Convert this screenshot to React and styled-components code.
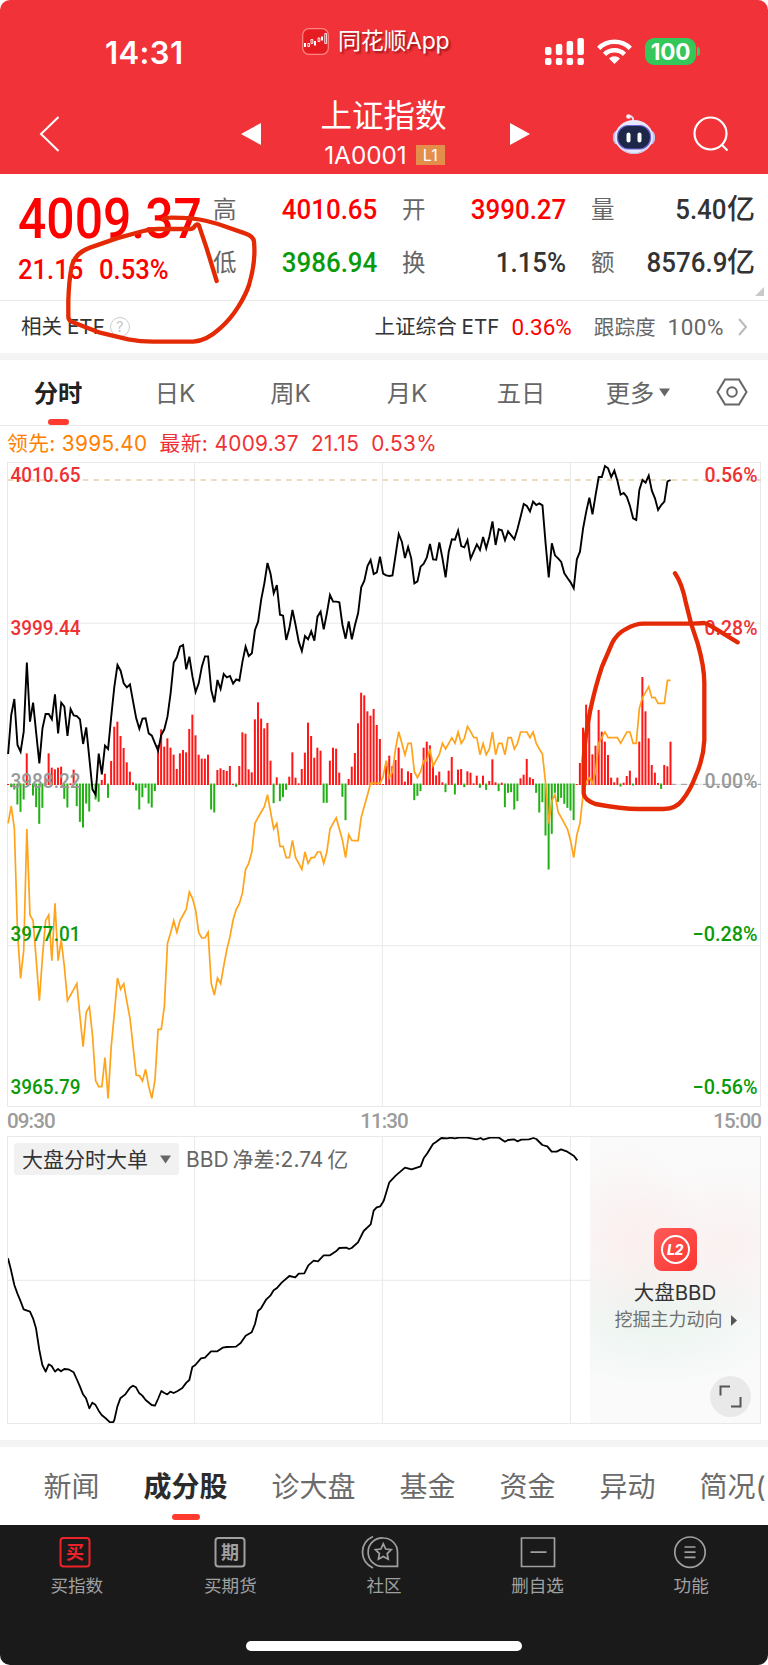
import styled, { createGlobalStyle } from 'styled-components';

const fonts = {
    ui: "Inter, 'Noto Sans CJK SC', sans-serif",
    num: "Roboto, 'Noto Sans CJK SC', sans-serif",
};
const colors = {
    brand: '#f13238',
    up: '#ff0000',
    down: '#0a9a0a',
    dark: '#333333',
    gray: '#666666',
    line: '#e9e9e9',
};

const GlobalStyle = createGlobalStyle`
    * { box-sizing: border-box; }
    body {
        margin: 0;
        background: #ffffff;
    }
    svg {
        display: block;
        flex: none;
    }
`;

const Screen = styled.div`
    position: relative;
    width: 768px;
    height: 1665px;
    overflow: hidden;
    border-radius: 10px;
    background: #fff;
    color: ${colors.dark};
    font-family: ${fonts.ui};
    white-space: nowrap;
    display: flex;
    flex-direction: column;
`;

// HEADER
const Header = styled.header`
    height: 174px;
    flex: none;
    background: ${colors.brand};
    color: #fff;
`;
const StatusBar = styled.div`
    height: 100px;
    display: grid;
    grid-template-columns: 302px 1fr 223px;
    align-items: start;
`;
const Clock = styled.div`
    padding: 36px 0 0 105px;
    font-size: 31px;
    line-height: 34px;
    font-weight: 600;
    letter-spacing: .4px;
`;
const AppMark = styled.div`
    display: flex;
    align-items: center;
    gap: 9px;
    padding-top: 24px;
    font-size: 23px;
    line-height: 34px;
    letter-spacing: -.3px;
    text-shadow: 2px 2px 2px rgba(90, 0, 0, .55);
`;
const StatusIcons = styled.div`
    display: flex;
    align-items: center;
    padding-top: 38px;
`;
const Wifi = styled.svg`
    margin-left: 13px;
`;
const Battery = styled.div`
    margin-left: 13px;
    width: 51px;
    height: 27px;
    border-radius: 9px;
    background: #34c759;
    text-align: center;
    font-size: 22.5px;
    line-height: 27px;
    font-weight: 700;
    letter-spacing: -.2px;
`;
const BatteryCap = styled.div`
    margin-left: 1px;
    width: 3px;
    height: 9px;
    border-radius: 0 4px 4px 0;
    background: #34c759;
`;
const TitleBar = styled.div`
    height: 74px;
    display: grid;
    grid-template-columns: 241px 20px 249px 23px 79px 1fr;
    align-items: center;
    padding-bottom: 6px;
`;
const BackIcon = styled.svg`
    margin-left: 39px;
`;
const TitleBlock = styled.div`
    padding-right: 4px;
    text-align: center;
`;
const Title = styled.div`
    font-size: 31.5px;
    line-height: 36px;
    margin-top: -3px;
`;
const Code = styled.div`
    display: flex;
    justify-content: center;
    align-items: center;
    gap: 9px;
    font-size: 24.3px;
    line-height: 26px;
    margin-top: 8px;
    padding-left: 2px;
`;
const Level = styled.span`
    width: 29px;
    height: 20px;
    background: #e38f4b;
    font-size: 16px;
    line-height: 20px;
    text-align: center;
`;
const TitleActions = styled.div`
    display: flex;
    align-items: center;
    gap: 37px;
`;

// QUOTE
const Quote = styled.section`
    position: relative;
    height: 127px;
    flex: none;
    border-bottom: 1px solid ${colors.line};
    display: grid;
    grid-template-columns: 213px 164px 25px 164px 25px 164px;
    font-family: ${fonts.num};
`;
const LastPrice = styled.div`
    padding: 20px 0 0 18px;
    color: ${colors.up};
    font-weight: 500;
`;
// the quote digits are narrower than the stock Roboto ones
const BigNumber = styled.div`
    width: 195px;
    font-size: 56px;
    line-height: 50px;
    transform: scaleX(.89);
    transform-origin: left;
`;
const Change = styled.div`
    display: flex;
    gap: 17px;
    margin-top: 11px;
    font-size: 27.5px;
    line-height: 30px;
    transform: scaleX(.93);
    transform-origin: left;
`;
const StatColumn = styled.div`
    padding-top: 20px;
    display: flex;
    flex-direction: column;
    gap: 21px;
    ${props => props.$spaced && 'grid-column: span 2; padding-left: 25px;'}
`;
const Stat = styled.div`
    display: flex;
    align-items: center;
    height: 32px;

    span {
        margin-right: auto;
        color: ${colors.gray};
        font-size: 23.5px;
        line-height: 32px;
    }
    strong {
        color: ${props => props.color || colors.dark};
        font-size: 28px;
        line-height: 32px;
        font-weight: 500;
        transform: scaleX(.925);
        transform-origin: right;
    }
    em {
        font-style: normal;
        font-weight: 500;
        font-size: 28px;
        line-height: 32px;
    }
`;
const Corner = styled.i`
    position: absolute;
    right: 4px;
    bottom: 4px;
    border-style: solid;
    border-width: 0 0 9px 9px;
    border-color: transparent transparent #c9c9c9 transparent;
`;
const EtfRow = styled.section`
    height: 52px;
    flex: none;
    display: flex;
    align-items: center;
    padding: 0 21px 0 21px;
    font-size: 20.6px;
    line-height: 30px;
    word-spacing: -1px;
`;
const Help = styled.span`
    margin: 0 auto 0 5px;
    width: 20px;
    height: 20px;
    border: 1.5px solid #ccc;
    border-radius: 50%;
    color: #c4c4c4;
    font-size: 14px;
    line-height: 17px;
    text-align: center;
`;
const EtfPercent = styled.span`
    margin: 0 22px 0 12px;
    font-family: ${fonts.num};
    font-size: 22.5px;
    color: ${colors.up};
`;
const Track = styled.span`
    color: ${colors.gray};
    margin-right: 14px;

    b {
        margin-left: 12px;
        font-family: ${fonts.num};
        font-weight: 400;
        font-size: 22.5px;
        letter-spacing: .5px;
    }
`;
const Divider = styled.div`
    height: 7px;
    flex: none;
    background: #f4f4f4;
`;

// CHART TABS
const PeriodTabs = styled.nav`
    height: 66px;
    flex: none;
    border-bottom: 1px solid ${colors.line};
    display: grid;
    grid-template-columns: 116px 118px 113px 120px 108px 126px 62px;
    font-size: 24.3px;
    color: ${colors.gray};
`;
const Period = styled.div`
    display: flex;
    justify-content: center;
    align-items: center;
    gap: 5px;
    line-height: 64px;
    padding-top: 1px;

    svg { margin-top: -2px; }
`;
const Indicator = styled.i`
    width: ${props => props.width}px;
    height: 6px;
    border-radius: 3px;
    background: #ff3b30;
`;
const ActivePeriod = styled.div`
    display: flex;
    flex-direction: column;
    align-items: center;
    color: #222;
    font-weight: 700;
    line-height: 62px;
    padding-top: 2px;

    i { margin-top: -5px; }
`;
const Legend = styled.div`
    height: 36px;
    flex: none;
    display: flex;
    gap: 12px;
    padding: 0 7px;
    font-size: 20.8px;
    line-height: 36px;
    letter-spacing: .35px;
    color: #ee3134;

    span:first-child { color: #ff8000; }
`;
const ChartLabel = styled.text`
    font-family: ${fonts.num};
    font-size: 20.5px;
    font-weight: 500;
    fill: ${props => props.fill};
`;
const TimeAxis = styled.div`
    height: 29px;
    flex: none;
    display: flex;
    justify-content: space-between;
    padding: 0 7px 0 7px;
    font-family: ${fonts.num};
    font-size: 20.6px;
    line-height: 29px;
    font-weight: 500;
    letter-spacing: -.9px;
    color: #9b9b9b;
`;

// BBD
const BbdPanel = styled.section`
    height: 288px;
    flex: none;
    margin: 0 7px;
    border: 1px solid ${colors.line};
    display: grid;
    grid-template-columns: 582px 1fr;
`;
const BbdChart = styled.div`
    position: relative;
`;
const BbdCaption = styled.div`
    position: absolute;
    top: 6px;
    left: 6px;
    display: flex;
    align-items: center;
    gap: 7px;
    font-size: 21px;
    line-height: 31px;
    word-spacing: -2px;
    color: ${colors.gray};
`;
const Select = styled.div`
    width: 165px;
    height: 32px;
    border-radius: 3px;
    background: #f1f1f1;
    color: ${colors.dark};
    display: flex;
    align-items: center;
    justify-content: space-between;
    padding: 0 8px;
`;
const Promo = styled.div`
    position: relative;
    padding-top: 91px;
    background:
        radial-gradient(ellipse 75px 100px at 22% 36%, rgba(255, 200, 200, .22), transparent),
        radial-gradient(ellipse 110px 85px at 80% 38%, rgba(255, 200, 200, .18), transparent),
        radial-gradient(ellipse 140px 70px at 40% 64%, rgba(190, 230, 210, .26), transparent),
        #fafafa;
    display: flex;
    flex-direction: column;
    align-items: center;
`;
const L2Icon = styled.div`
    width: 43px;
    height: 43px;
    border-radius: 8px;
    background: linear-gradient(135deg, #ff5b58, #fb3530);
    display: flex;
    align-items: center;
    justify-content: center;

    span {
        width: 29px;
        height: 29px;
        border: 2px solid #fff;
        border-radius: 50%;
        color: #fff;
        font: italic 800 14px/25px Inter, sans-serif;
        text-align: center;
        letter-spacing: -.5px;
    }
`;
const PromoTitle = styled.div`
    margin-top: 8px;
    font-size: 20.5px;
    line-height: 28px;
`;
const PromoLink = styled.div`
    display: flex;
    align-items: center;
    gap: 8px;
    padding-left: 1px;
    color: #707070;
    font-size: 18px;
    line-height: 26px;
`;
const Expand = styled.div`
    position: absolute;
    right: 9px;
    bottom: 6px;
    width: 41px;
    height: 41px;
    border-radius: 50%;
    background: #e9e9e9;
    display: flex;
    align-items: center;
    justify-content: center;
`;
const Spacer = styled.div`
    height: 16px;
    flex: none;
`;

// BOTTOM
const SectionTabs = styled.nav`
    height: 78px;
    flex: none;
    display: flex;
    gap: 44px;
    padding-left: 43.5px;
    font-size: 28px;
    line-height: 81px;
    color: #6b6b6b;
`;
const SectionTab = styled.div`
    flex: none;
    display: flex;
    flex-direction: column;
    align-items: center;
    height: 78px;
    ${props => props.$active && 'color: #2b2b2b; font-weight: 700;'}

    i { margin-top: -14px; }
`;
const BottomBar = styled.footer`
    height: 140px;
    flex: none;
    background: #1a1a1a;
    display: flex;
    flex-direction: column;
    align-items: center;
    justify-content: space-between;
    padding-bottom: 14px;
`;
const NavItems = styled.div`
    width: 768px;
    display: flex;
`;
const NavItem = styled.div`
    flex: 1;
    padding-top: 10px;
    display: flex;
    flex-direction: column;
    align-items: center;
    color: #a0a0a0;
    font-size: 17.6px;
    line-height: 20px;

    svg {
        margin-bottom: 7px;
        margin-left: ${props => props.$shift || 0}px;
    }
`;
const IconText = styled.text`
    font-family: 'Noto Sans CJK SC', sans-serif;
    font-weight: 700;
    font-size: 18px;
    text-anchor: middle;
`;
const HomeIndicator = styled.div`
    width: 276px;
    height: 10px;
    border-radius: 5px;
    background: #fff;
`;
const Scribbles = styled.svg`
    position: absolute;
    top: 0;
    left: 0;
    pointer-events: none;
`;

// One value per minute from 09:30, kept at three units per pixel
const price = [
    912, 795, 747, 885, 905, 845, 638, 815, 758, 850, 940, 835, 792, 792, 808, 733, 850, 758, 770, 858,
    777, 796, 798, 808, 882, 832, 925, 1018, 1034, 911, 973, 887, 897, 800, 710, 645, 662, 700, 712, 703,
    755, 805, 836, 806, 805, 850, 857, 880, 902, 855, 838, 800, 730, 638, 622, 590, 585, 658, 620, 680,
    726, 700, 650, 619, 619, 720, 757, 690, 717, 672, 682, 678, 701, 688, 692, 635, 590, 618, 610, 540,
    515, 448, 400, 339, 372, 430, 405, 494, 497, 570, 535, 480, 525, 575, 603, 558, 568, 544, 572, 500,
    485, 538, 490, 435, 455, 455, 457, 525, 566, 514, 568, 525, 490, 412, 392, 348, 330, 372, 367, 320,
    371, 376, 378, 376, 315, 252, 275, 324, 291, 325, 400, 394, 350, 341, 322, 282, 328, 329, 277, 325,
    382, 305, 268, 269, 242, 288, 292, 270, 326, 305, 283, 300, 261, 295, 260, 214, 285, 238, 241, 271,
    244, 256, 268, 237, 200, 162, 168, 184, 155, 165, 160, 166, 280, 382, 280, 316, 325, 336, 370, 384,
    397, 415, 328, 305, 235, 185, 143, 193, 135, 81, 81, 48, 55, 81, 62, 93, 134, 129, 141, 168,
    205, 210, 120, 90, 98, 77, 122, 145, 180, 165, 155, 94, 90,
];
const leading = [
    1120, 1068, 1135, 1445, 1585, 1500, 1137, 1395, 1412, 1530, 1652, 1520, 1412, 1395, 1532, 1360, 1532, 1470, 1550, 1652,
    1635, 1618, 1601, 1700, 1790, 1687, 1670, 1755, 1892, 1910, 1910, 1823, 1945, 1790, 1690, 1584, 1618, 1601, 1655, 1705,
    1790, 1876, 1877, 1893, 1858, 1910, 1945, 1890, 1738, 1738, 1670, 1480, 1448, 1412, 1447, 1412, 1395, 1378, 1326, 1345,
    1380, 1448, 1464, 1464, 1447, 1600, 1635, 1584, 1601, 1548, 1498, 1460, 1410, 1378, 1361, 1328, 1258, 1240, 1206, 1120,
    1102, 1086, 1070, 1034, 1086, 1137, 1120, 1189, 1189, 1223, 1223, 1171, 1223, 1240, 1258, 1206, 1240, 1223, 1223, 1206,
    1206, 1240, 1206, 1137, 1120, 1103, 1137, 1171, 1223, 1154, 1171, 1172, 1172, 1102, 1068, 1035, 1000, 1000, 1000, 1000,
    980, 932, 983, 965, 895, 845, 880, 915, 880, 880, 965, 983, 965, 932, 932, 897, 948, 930, 913, 880,
    897, 880, 863, 880, 846, 880, 865, 829, 845, 862, 863, 914, 880, 914, 897, 846, 914, 880, 880, 914,
    863, 863, 897, 880, 846, 846, 846, 863, 846, 880, 897, 913, 1000, 1120, 1052, 1034, 1086, 1103, 1120, 1137,
    1172, 1223, 1155, 1120, 1035, 995, 983, 1000, 965, 880, 863, 846, 863, 863, 863, 863, 880, 863, 846, 846,
    880, 880, 775, 743, 727, 710, 743, 743, 760, 760, 760, 691, 691,
];
const flow = [
    3, -8, -15, -60, -82, -45, 95, 3, -33, -68, -118, -70, 20, 95, 52, 47, 52, 55, -43, -69,
    5, 46, -65, -112, -129, -57, -81, 3, -45, -52, 15, 34, -40, 72, 175, 190, 147, 111, 68, 40,
    8, -18, -75, -38, -10, -57, -69, -20, 120, 167, 115, 140, 112, 91, 48, 95, 105, 98, 168, 211,
    149, 91, 79, 79, 91, -75, -84, 45, 50, 45, 42, 57, 4, -7, 57, 158, 154, 47, 38, 197,
    248, 199, 170, 186, 73, -56, 23, -50, -38, -16, 25, 98, 22, 5, 48, 97, 187, 147, 82, 112,
    103, -55, -55, 73, 112, 109, 37, -37, -107, 18, 55, 96, 185, 277, 269, 221, 208, 228, 180, 138,
    3, 70, 88, 57, 75, 112, 50, 10, 41, 36, -47, -34, -20, 112, 130, 119, 60, 29, 40, 8,
    -23, 43, 84, -30, 46, 48, -8, 41, 37, 5, 28, -10, 28, -16, 12, 77, 8, -20, 7, -68,
    -25, -23, -75, -50, 20, 31, 78, 23, 18, -25, -84, -53, -153, -255, -148, -25, -52, -40, -58, -70,
    -78, -107, 3, 66, 172, 241, 217, 92, 118, 225, 160, 130, 90, 22, 8, 22, -6, 7, 27, 43,
    -3, 22, 130, 324, 221, 140, 60, 37, 6, -13, 60, 56, 130,
];
const bbd = '24,415 33,450 43,495 52,520 61,542 71,568 90,575 99,595 108,625 118,690 127,735 137,755 146,733 155,738 165,755 174,747 183,754 193,747 205,748 221,757 230,777 240,800 249,823 258,835 268,865 277,848 286,854 296,872 305,885 316,894 330,907 340,906 343,900 352,860 361,835 375,824 390,803 399,797 408,802 418,820 427,827 437,840 455,855 465,857 474,837 484,813 493,819 502,823 511,815 521,819 533,813 547,804 559,788 568,780 577,741 586,735 603,715 615,713 633,694 652,694 668,683 680,681 708,680 722,669 737,647 755,637 765,612 774,573 783,565 799,538 811,527 821,511 830,505 845,488 868,468 886,472 896,461 913,460 925,436 941,422 954,424 971,406 990,406 1008,394 1018,384 1040,383 1047,387 1055,384 1074,367 1091,333 1112,313 1121,272 1130,262 1141,259 1149,246 1152,240 1168,187 1187,167 1215,143 1235,148 1262,139 1271,115 1282,100 1299,72 1307,67 1324,54 1342,55 1352,53 1364,55 1377,53 1402,53 1430,58 1442,54 1450,59 1470,53 1497,53 1515,65 1524,60 1542,58 1552,64 1564,59 1587,58 1600,54 1609,57 1627,75 1642,79 1655,95 1670,95 1683,88 1702,95 1722,108 1732,121';

const minuteX = i => 8.1 + i * 3.125;
const toPoints = series => series.map((v, i) => `${minuteX(i)},${v / 3 - 12}`).join(' ');

const leftLabels = [
    ['4010.65', 19.7, '#ee3134'],
    ['3999.44', 173, '#ee3134'],
    ['3988.22', 325.7, '#999'],
    ['3977.01', 479, colors.down],
    ['3965.79', 632, colors.down],
];
const rightLabels = [
    ['0.56%', 19.7, '#ee3134', 53],
    ['0.28%', 173, '#ee3134', 53],
    ['0.00%', 325.7, '#999', 53],
    ['−0.28%', 479, colors.down, 65],
    ['−0.56%', 632, colors.down, 65],
];

function MinuteChart() {
    return (
        <svg width="768" height="645" viewBox="0 0 768 645">
            <g stroke={colors.line} strokeWidth="1" fill="none">
                <rect x="7.5" y=".5" width="753" height="644" />
                <path d="M8 161.2H760M8 322.5H760M8 483.7H760M194.6 1V644M382.4 1V644M570.4 1V644" />
            </g>
            <path d="M8 18H761" stroke="#e6cda9" strokeWidth="1.6" strokeDasharray="5.4 5.3" />
            <path d="M670 322.3H761" stroke="#999" strokeWidth="1" strokeDasharray="6 5" />
            {flow.map((v, i) => (
                <rect
                    key={i}
                    x={minuteX(i) - 1.1}
                    y={v > 0 ? 323 - v / 3 : 321.5}
                    width="2"
                    height={Math.abs(v) / 3 + (v > 0 ? 0 : 1)}
                    fill={v > 0 ? '#ff1616' : '#22b014'}
                />
            ))}
            <polyline points={toPoints(leading)} fill="none" stroke="#ffa31a" strokeWidth="1.7" />
            <polyline points={toPoints(price)} fill="none" stroke="#000" strokeWidth="1.9" />
            {leftLabels.map(([label, y, fill]) => (
                <ChartLabel key={label} x="10.5" y={y} fill={fill} textLength="70" lengthAdjust="spacingAndGlyphs">{label}</ChartLabel>
            ))}
            {rightLabels.map(([label, y, fill, width]) => (
                <ChartLabel key={label} x={757.5 - width} y={y} fill={fill} textLength={width} lengthAdjust="spacingAndGlyphs">{label}</ChartLabel>
            ))}
        </svg>
    )
}

function Robot() {
    return (
        <svg width="44" height="42" viewBox="0 0 44 42">
            <path d="M21 9C22 5 20 3 17 3" fill="none" stroke="#dfe1f8" strokeWidth="2" />
            <circle cx="16.5" cy="3.5" r="2.3" fill="#f2f0ff" />
            <rect x="1" y="17" width="42" height="15" rx="6" fill="#bfc5ee" />
            <ellipse cx="22" cy="24" rx="19" ry="17" fill="#e8e8fb" />
            <path d="M8 34Q22 46 36 34Q30 41 22 41Q14 41 8 34Z" fill="#b9bce6" />
            <rect x="5.5" y="12.5" width="33" height="23.5" rx="11" fill="#1d2748" stroke="#6d62d8" strokeWidth="1.2" />
            <rect x="14.5" y="19.5" width="4" height="10" rx="2" fill="#fff" />
            <rect x="25.5" y="19.5" width="4" height="10" rx="2" fill="#fff" />
        </svg>
    )
}

function StatusRow() {
    return (
        <StatusBar>
            <Clock>14:31</Clock>
            <AppMark>
                <svg width="27" height="27" viewBox="0 0 27 27">
                    <rect x=".7" y=".7" width="25.6" height="25.6" rx="6" fill="#e51c22" stroke="#ff8585" strokeWidth="1.2" />
                    <path d="M3 15v4M13 13v4.5M20 8.5v4" stroke="#fff" strokeWidth="2" />
                    <path d="M5.8 15.5h1.8v3h-1.8ZM9 11.5h1.8v4h-1.8ZM16 10h1.8v3.5h-1.8ZM22.8 5.5h1.8v10h-1.8Z" fill="none" stroke="#fff" strokeWidth=".9" />
                </svg>
                同花顺App
            </AppMark>
            <StatusIcons>
                <svg width="39" height="27" viewBox="0 0 39 27" fill="#fff">
                    <rect x="0" y="9" width="6.5" height="8" rx="2" />
                    <rect x="10.8" y="6" width="6.5" height="11" rx="2" />
                    <rect x="21.6" y="3" width="6.5" height="14" rx="2" />
                    <rect x="32.4" y="0" width="6.5" height="17" rx="2" />
                    <rect x="0" y="20" width="6.5" height="7" rx="2" />
                    <rect x="10.8" y="20" width="6.5" height="7" rx="2" />
                    <rect x="21.6" y="20" width="6.5" height="7" rx="2" />
                    <rect x="32.4" y="20" width="6.5" height="7" rx="2" />
                </svg>
                <Wifi width="35" height="25" viewBox="0 0 35 25" fill="none" stroke="#fff" strokeWidth="4.6">
                    <path d="M1.7 9.3A22.5 22.5 0 0 1 33.3 9.3" />
                    <path d="M7.5 15.3A14.5 14.5 0 0 1 27.5 15.3" />
                    <path d="M17.5 25L12 19.5A8 8 0 0 1 23 19.5Z" fill="#fff" stroke="none" />
                </Wifi>
                <Battery>100</Battery>
                <BatteryCap />
            </StatusIcons>
        </StatusBar>
    )
}

const Caret = () => (
    <svg width="11" height="9" viewBox="0 0 11 9">
        <path d="M0 .5H11L5.5 8.5Z" fill="#666" />
    </svg>
)

function NavIcon({ kind }) {
    if (kind === 'buy' || kind === 'futures') {
        const color = kind === 'buy' ? '#ee2229' : '#a0a0a0';
        return (
            <svg width="32" height="34" viewBox="0 0 32 34">
                <rect x="1.5" y="3" width="29" height="28.5" rx="3" fill="none" stroke={color} strokeWidth="2" />
                <IconText x="16" y="24" fill={color}>{kind === 'buy' ? '买' : '期'}</IconText>
            </svg>
        )
    }
    return (
        <svg width="38" height="34" viewBox="0 0 38 34" fill="none" stroke="#a0a0a0" strokeWidth="1.7">
            {kind === 'community' &&
                <>
                    <path d="M22.5 3A14.2 14.2 0 1 0 22.5 31.3H36.5V17.2A14.2 14.2 0 0 0 22.5 3Z" />
                    <path d="M12 1.5C-2 8 -2 26 12 33" />
                    <path d="M22.3 8.8L24.7 14L30.2 14.7L26.2 18.6L27.2 24.2L22.3 21.5L17.4 24.2L18.4 18.6L14.4 14.7L19.9 14Z" />
                </>
            }
            {kind === 'remove' && <path d="M2.5 3H35.5V31.5H2.5ZM11.5 17.2H27.5" />}
            {kind === 'menu' &&
                <>
                    <circle cx="19" cy="17.2" r="15.2" />
                    <path d="M13.5 12H24.5M13.5 17.2H24.5M13.5 22.4H24.5" />
                </>
            }
        </svg>
    )
}

function App() {
    return (
        <Screen>
            <GlobalStyle />
            <Header>
                <StatusRow />
                <TitleBar>
                    <BackIcon width="21" height="38" viewBox="0 0 21 38">
                        <path d="M19.5 2L2 19L19.5 36" fill="none" stroke="#fff" strokeWidth="2" />
                    </BackIcon>
                    <svg width="20" height="22" viewBox="0 0 20 22"><path d="M20 0V22L0 11Z" fill="#fff" /></svg>
                    <TitleBlock>
                        <Title>上证指数</Title>
                        <Code>1A0001<Level>L1</Level></Code>
                    </TitleBlock>
                    <svg width="20" height="22" viewBox="0 0 20 22"><path d="M0 0V22L20 11Z" fill="#fff" /></svg>
                    <span />
                    <TitleActions>
                        <Robot />
                        <svg width="36" height="36" viewBox="0 0 36 36" fill="none" stroke="#fff" strokeWidth="2.2">
                            <circle cx="17.5" cy="17.5" r="16" />
                            <path d="M28.5 28.5L34.5 34.5" />
                        </svg>
                    </TitleActions>
                </TitleBar>
            </Header>

            <Quote>
                <LastPrice>
                    <BigNumber>4009.37</BigNumber>
                    <Change><span>21.15</span><span>0.53%</span></Change>
                </LastPrice>
                <StatColumn>
                    <Stat color={colors.up}><span>高</span><strong>4010.65</strong></Stat>
                    <Stat color={colors.down}><span>低</span><strong>3986.94</strong></Stat>
                </StatColumn>
                <StatColumn $spaced>
                    <Stat color={colors.up}><span>开</span><strong>3990.27</strong></Stat>
                    <Stat><span>换</span><strong>1.15%</strong></Stat>
                </StatColumn>
                <StatColumn $spaced>
                    <Stat><span>量</span><strong>5.40</strong><em>亿</em></Stat>
                    <Stat><span>额</span><strong>8576.9</strong><em>亿</em></Stat>
                </StatColumn>
                <Corner />
            </Quote>
            <EtfRow>
                相关 ETF
                <Help>?</Help>
                上证综合 ETF
                <EtfPercent>0.36%</EtfPercent>
                <Track>跟踪度<b>100%</b></Track>
                <svg width="9" height="18" viewBox="0 0 9 18">
                    <path d="M1 1L8 9L1 17" fill="none" stroke="#bbb" strokeWidth="2" />
                </svg>
            </EtfRow>
            <Divider />

            <PeriodTabs>
                <ActivePeriod>分时<Indicator width={21} /></ActivePeriod>
                <Period>日K</Period>
                <Period>周K</Period>
                <Period>月K</Period>
                <Period>五日</Period>
                <Period>更多<Caret /></Period>
                <Period>
                    <svg width="32" height="28" viewBox="0 0 32 28" fill="none" stroke="#666" strokeWidth="2">
                        <path d="M9 1.5H23L30.5 14L23 26.5H9L1.5 14Z" />
                        <circle cx="16" cy="14" r="4.8" />
                    </svg>
                </Period>
            </PeriodTabs>
            <Legend>
                <span>领先: 3995.40</span>
                <span>最新: 4009.37</span>
                <span>21.15</span>
                <span>0.53%</span>
            </Legend>
            <MinuteChart />
            <TimeAxis>
                <span>09:30</span>
                <span>11:30</span>
                <span>15:00</span>
            </TimeAxis>

            <BbdPanel>
                <BbdChart>
                    <svg width="582" height="286" viewBox="8 1137 582 286">
                        <path d="M8 1280.3H590M194.6 1137V1424M382.4 1137V1424M570.4 1137V1424" stroke={colors.line} fill="none" />
                        <g transform="translate(0 1120) scale(.33333)">
                            <polyline points={bbd} fill="none" stroke="#000" strokeWidth="5.4" strokeLinejoin="round" />
                        </g>
                    </svg>
                    <BbdCaption>
                        <Select>大盘分时大单<Caret /></Select>
                        BBD 净差:2.74 亿
                    </BbdCaption>
                </BbdChart>
                <Promo>
                    <L2Icon><span>L2</span></L2Icon>
                    <PromoTitle>大盘BBD</PromoTitle>
                    <PromoLink>
                        挖掘主力动向
                        <svg width="6" height="11" viewBox="0 0 6 11"><path d="M0 0L6 5.5L0 11Z" fill="#555" /></svg>
                    </PromoLink>
                    <Expand>
                        <svg width="23" height="23" viewBox="0 0 23 23" fill="none" stroke="#555" strokeWidth="2">
                            <path d="M1.5 10.5V1.5H11M21.5 12V21.5H12" />
                        </svg>
                    </Expand>
                </Promo>
            </BbdPanel>
            <Spacer />
            <Divider />

            <SectionTabs>
                <SectionTab>新闻</SectionTab>
                <SectionTab $active>成分股<Indicator width={28} /></SectionTab>
                <SectionTab>诊大盘</SectionTab>
                <SectionTab>基金</SectionTab>
                <SectionTab>资金</SectionTab>
                <SectionTab>异动</SectionTab>
                <SectionTab>简况(</SectionTab>
            </SectionTabs>
            <BottomBar>
                <NavItems>
                    <NavItem $shift={-3}><NavIcon kind="buy" />买指数</NavItem>
                    <NavItem><NavIcon kind="futures" />买期货</NavItem>
                    <NavItem $shift={-7}><NavIcon kind="community" />社区</NavItem>
                    <NavItem><NavIcon kind="remove" />删自选</NavItem>
                    <NavItem $shift={-3}><NavIcon kind="menu" />功能</NavItem>
                </NavItems>
                <HomeIndicator />
            </BottomBar>

            {/* hand drawn marks */}
            <Scribbles width="768" height="1665" viewBox="0 0 768 1665">
                <g fill="none" stroke="#e42a04" strokeWidth="13" strokeLinecap="round" strokeLinejoin="round">
                    <path transform="translate(0 170) scale(.33333)" d="M490 148Q497 143 515 143Q580 143 620 153Q650 160 680 171L735 190Q760 198 762 215Q768 275 747 345Q737 375 715 410Q690 450 660 475Q620 512 580 515H460Q420 515 385 508L300 488L215 455Q205 450 205 440V390Q207 335 213 300Q220 250 270 233L350 205L430 183Q450 177 475 177H570Q578 177 583 170Q592 158 597 167Q610 205 620 235L650 333" />
                    <path transform="translate(512 450) scale(.33333)" d="M489 370Q510 400 522 460L537 520L557 580Q577 650 577 700V870Q575 925 550 980Q535 1020 510 1052Q492 1076 455 1077H380Q330 1077 250 1062Q217 1050 215 1030V930Q217 870 235 780Q250 710 270 650Q285 615 300 580Q315 550 340 538Q370 521 395 521H540Q575 519 577 519Q585 521 600 530L677 577" />
                </g>
            </Scribbles>
        </Screen>
    )
}

export default App;
